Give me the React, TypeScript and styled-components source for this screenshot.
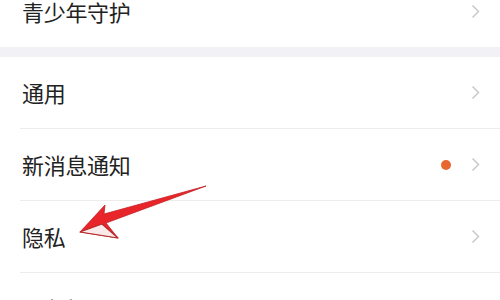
import React from "react";
import styled, { createGlobalStyle } from "styled-components";

const Global = createGlobalStyle`
  html, body { margin: 0; padding: 0; background: #ffffff; }
  body { width: 500px; height: 300px; overflow: hidden; }
`;

const Page = styled.div`
  position: relative;
  width: 500px;
  height: 300px;
  overflow: hidden;
  background: #ffffff;
  font-family: "Noto Sans CJK SC", "Noto Sans", sans-serif;
`;

const List = styled.div`
  display: flex;
  flex-direction: column;
  margin-top: -24px;
`;

const Group = styled.div`
  display: flex;
  flex-direction: column;
  background: #ffffff;
`;

const Band = styled.div`
  height: 10px;
  background: #f2f2f6;
`;

const Row = styled.div<{ $divider?: boolean }>`
  position: relative;
  height: 71px;
  display: flex;
  align-items: center;
  padding: 0 20px 0 22px;
  box-sizing: border-box;
  margin-bottom: ${(p) => (p.$divider ? "1px" : "0")};
  &::after {
    content: "";
    display: ${(p) => (p.$divider ? "block" : "none")};
    position: absolute;
    left: 20px;
    right: 0;
    bottom: -1px;
    height: 1px;
    background: #ececec;
  }
`;

const Label = styled.span`
  flex: 1;
  font-size: 22px;
  line-height: 30px;
  color: #222222;
  letter-spacing: -0.3px;
  margin-bottom: 2px;
`;

const Dot = styled.span`
  width: 10px;
  height: 10px;
  border-radius: 50%;
  background: #e8672e;
  margin-right: 20px;
`;

const Chevron = () => (
  <svg width="9" height="15" viewBox="0 0 9 15">
    <polyline
      points="1.5,1.5 7.5,7.5 1.5,13.5"
      fill="none"
      stroke="#c4c4c4"
      strokeWidth="1.4"
    />
  </svg>
);

const ArrowLayer = styled.svg`
  position: absolute;
  left: 0;
  top: 0;
  pointer-events: none;
`;

type Item = { label: string; dot?: boolean; divider?: boolean };

const groups: Item[][] = [
  [{ label: "青少年守护" }],
  [
    { label: "通用", divider: true },
    { label: "新消息通知", dot: true, divider: true },
    { label: "隐私", divider: true },
    { label: "朋友权限" },
  ],
];

export default function App() {
  return (
    <Page>
      <Global />
      <List>
        {groups.map((g, gi) => (
          <React.Fragment key={gi}>
            {gi > 0 && <Band />}
            <Group>
              {g.map((it) => (
                <Row key={it.label} $divider={it.divider}>
                  <Label>{it.label}</Label>
                  {it.dot && <Dot />}
                  <Chevron />
                </Row>
              ))}
            </Group>
          </React.Fragment>
        ))}
      </List>
      <ArrowLayer width="500" height="300" viewBox="0 0 500 300">
        <polygon
          points="80,232 105,205 104,214 206,186 106,223 118,238"
          fill="#e8262a"
          stroke="#c42024"
          strokeWidth="0.8"
          strokeLinejoin="round"
        />
        <polygon
          points="80,232 102,224 118,238"
          fill="#fbeaea"
          stroke="#b52a2a"
          strokeWidth="1.2"
          strokeLinejoin="round"
        />
      </ArrowLayer>
    </Page>
  );
}
